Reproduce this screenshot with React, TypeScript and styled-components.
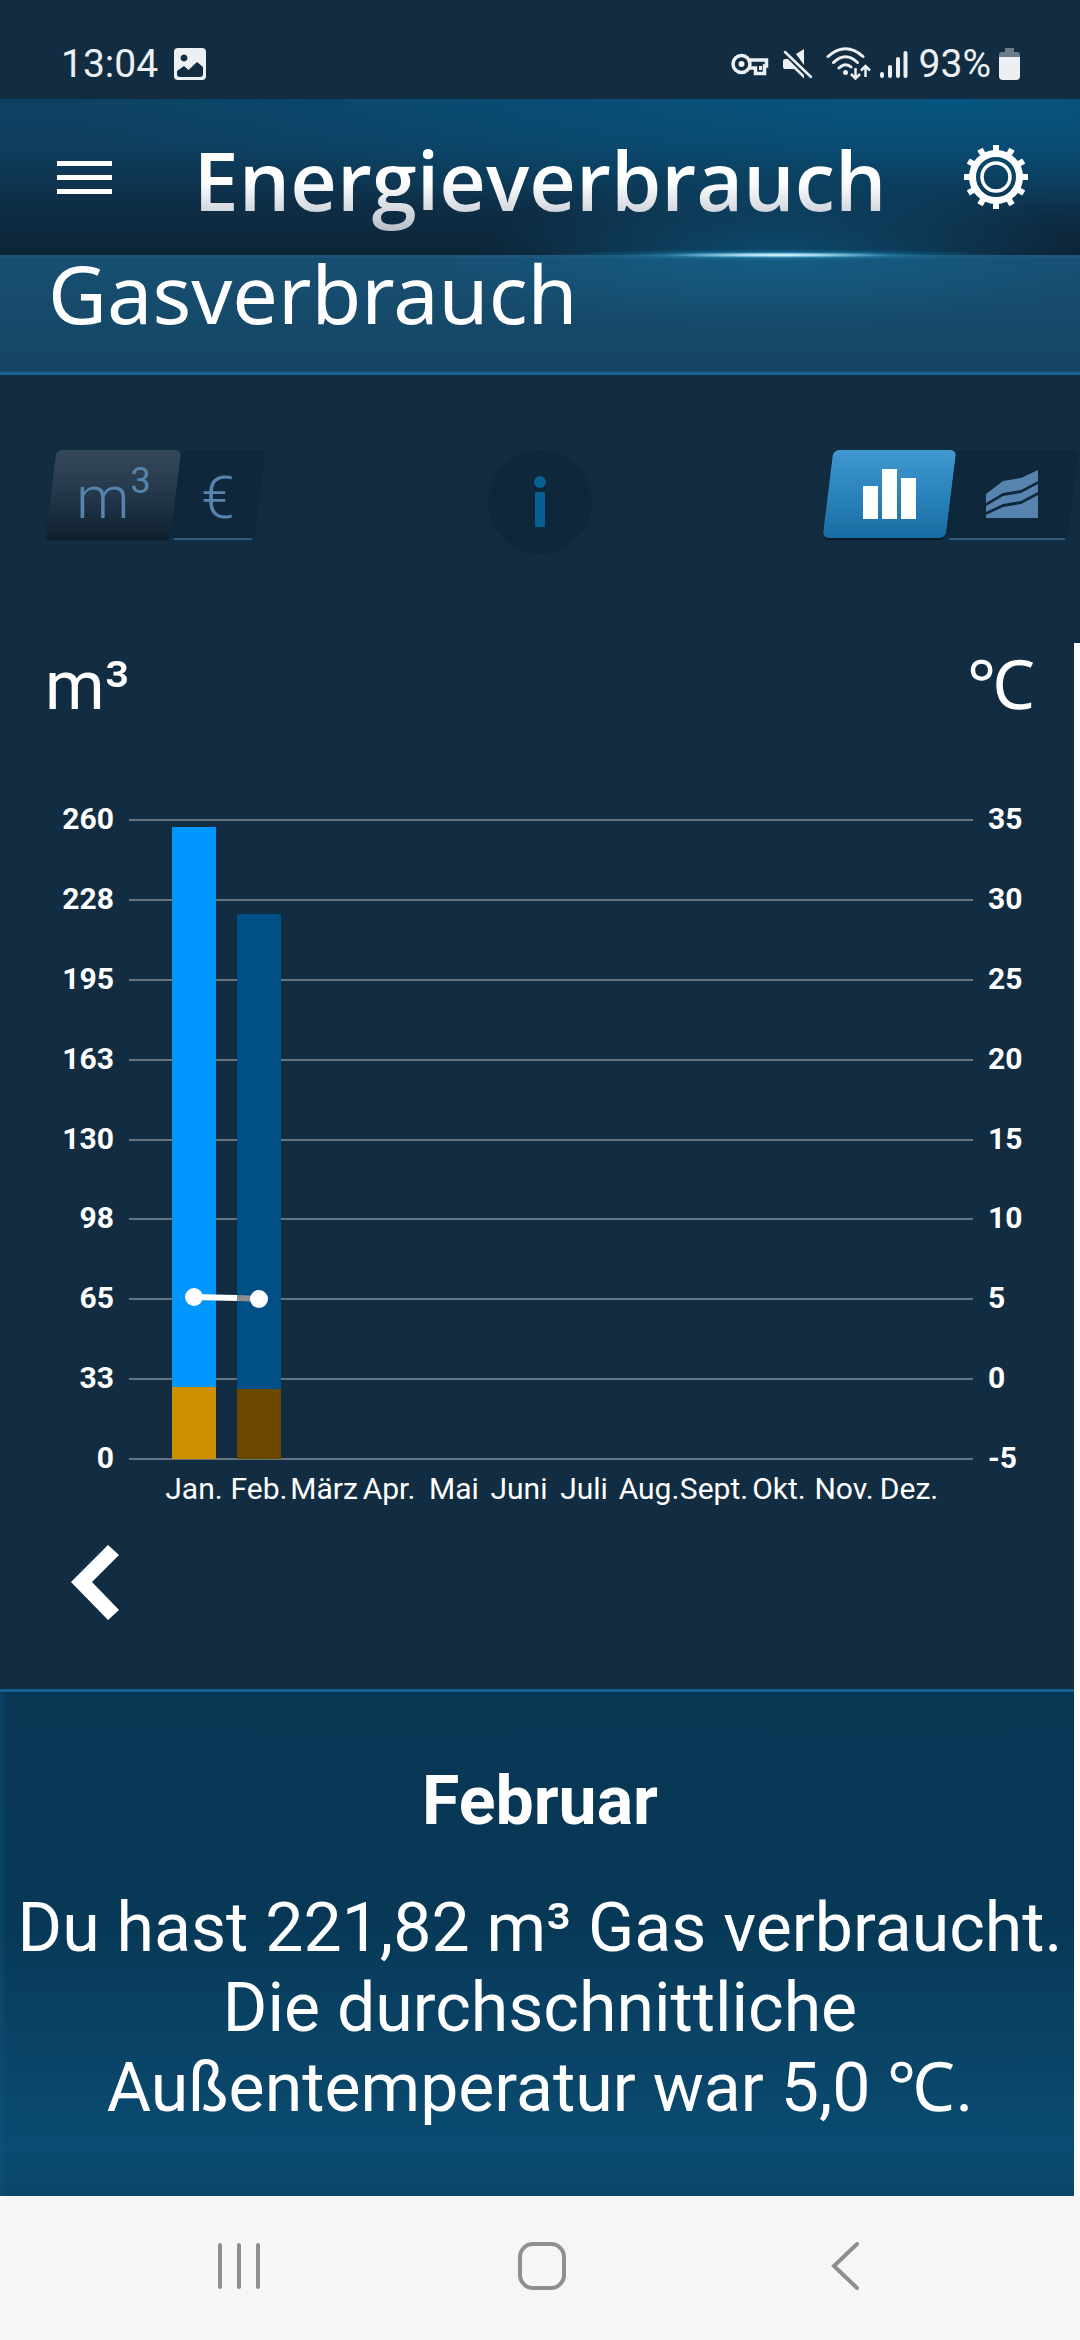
import React from "react";
import styled, { createGlobalStyle, css } from "styled-components";

const GlobalStyle = createGlobalStyle`
  *, *::before, *::after { box-sizing: border-box; }
  html, body { margin: 0; padding: 0; }
  body {
    background: #122d42;
    color: #fff;
    font-family: Roboto, "Liberation Sans", sans-serif;
  }
`;

const Screen = styled.div`
  display: flex;
  flex-direction: column;
  min-height: 100vh;
`;

const StatusBar = styled.header`
  display: flex;
  align-items: center;
  justify-content: space-between;
  height: 99px;
  padding: 28px 60px 0 61px;
  background: #122d42;
  color: #edf0f3;
  font-size: 39px;
  line-height: 48px;
`;

const StatusGroup = styled.div<{ $gap: number }>`
  display: flex;
  align-items: center;
  gap: ${(p) => p.$gap}px;
`;

const StatusIcons = styled.svg`
  display: block;
`;

const TitleBar = styled.div`
  position: relative;
  display: grid;
  grid-template-columns: 168px 1fr 168px;
  align-items: center;
  height: 156px;
  background:
    radial-gradient(ellipse 300px 80px at 72% 156px, rgba(12, 94, 138, 0.65), rgba(12, 80, 120, 0) 100%),
    radial-gradient(ellipse 900px 130px at 88% 0, rgba(4, 92, 138, 0.75), rgba(4, 90, 134, 0) 100%),
    linear-gradient(#0d4163 0%, #0e3e5e 30%, #0e2d45 70%, #0d2437 100%);
`;

const Flare = styled.div`
  position: absolute;
  left: 50%;
  bottom: -6px;
  width: 44%;
  height: 12px;
  z-index: 2;
  background:
    radial-gradient(ellipse 24% 22% at 50% 50%, rgba(225, 250, 255, 0.95), rgba(160, 225, 240, 0) 100%),
    radial-gradient(ellipse 50% 50% at 50% 50%, rgba(130, 220, 245, 0.95), rgba(50, 160, 205, 0.7) 30%, rgba(20, 120, 165, 0.3) 65%, rgba(20, 110, 150, 0) 100%);
`;

const IconButton = styled.button`
  display: flex;
  align-items: center;
  justify-content: center;
  padding: 0;
  border: 0;
  background: none;
  color: inherit;
  cursor: pointer;

  svg { display: block; }
`;

const headingFont = css`
  margin: 0;
  font-size: 81px;
  white-space: nowrap;
`;

const Title = styled.h1`
  ${headingFont}
  padding-top: 6px;
  font-family: "Open Sans", "Noto Sans", sans-serif;
  font-weight: 600;
  line-height: 108px;
  text-align: center;
  background: linear-gradient(#fff 54%, #d4d8de 79%, #b4bac4 100%);
  background-clip: text;
  -webkit-background-clip: text;
  color: transparent;
`;

const Section = styled.section`
  height: 120px;
  padding: 0 48px;
  border-top: 3px solid #20557a;
  border-bottom: 3px solid #19649b;
  background:
    radial-gradient(ellipse 360px 70px at 72% 0, rgba(20, 100, 142, 0.6), rgba(20, 90, 130, 0)),
    linear-gradient(#174f72, #154563);
`;

const SectionTitle = styled.h2`
  ${headingFont}
  font-family: "Noto Sans", "Open Sans", sans-serif;
  font-weight: 400;
  line-height: 70px;
`;

const Content = styled.main`
  flex: 1;
  display: flex;
  flex-direction: column;
`;

const Controls = styled.div`
  display: grid;
  grid-template-columns: 1fr auto 1fr;
  align-items: start;
  padding: 75px 7px 0;
`;

const Toggle = styled.div<{ $end?: boolean }>`
  display: flex;
  margin-left: ${(p) => (p.$end ? "auto" : "44px")};
`;

const Segment = styled.button<{ $width: number; $look: "dark" | "blue" | "off" }>`
  position: relative;
  z-index: 0;
  display: flex;
  align-items: center;
  justify-content: center;
  width: ${(p) => p.$width}px;
  height: 88px;
  padding: 0;
  border: 0;
  background: none;
  color: #5684ae;
  font-family: inherit;
  font-size: 60px;
  font-weight: 300;
  line-height: 88px;
  cursor: pointer;

  &::before {
    content: "";
    position: absolute;
    inset: 0;
    z-index: -1;
    border-radius: 6px;
    transform: skewX(-7deg);
    background: ${(p) =>
      p.$look === "dark"
        ? "linear-gradient(#36495b, #24384b 50%, #10212f)"
        : p.$look === "blue"
        ? "linear-gradient(#3f98cf, #2a84bb 50%, #176da2)"
        : "#0e273b"};
    box-shadow: ${(p) => (p.$look === "off" ? "none" : "0 2px 1px #0b1c2a")};
  }

  ${(p) =>
    p.$look === "off" &&
    css`
      &::after {
        content: "";
        position: absolute;
        left: -2px;
        right: 8px;
        bottom: -2px;
        height: 2px;
        background: #305b81;
      }
    `}

  svg { display: block; }
`;

const SegmentLabel = styled.span`
  display: flex;
  align-items: flex-start;
  gap: 1px;
  padding-top: 8px;
`;

const Exponent = styled.sup`
  font-size: 36px;
  font-weight: 400;
  line-height: 54px;
`;

const InfoButton = styled.button`
  display: flex;
  align-items: center;
  justify-content: center;
  width: 104px;
  height: 104px;
  padding: 0;
  border: 0;
  border-radius: 50%;
  background: #0e273b;
  cursor: pointer;
`;

const Units = styled.div`
  display: flex;
  justify-content: space-between;
  margin-top: 92px;
  padding: 0 45px;
  font-size: 68px;
  line-height: 80px;
`;

const Chart = styled.svg`
  display: block;
  width: 100%;
  height: auto;
  margin-top: 74px;
  overflow: visible;
  font-family: Roboto, "Liberation Sans", sans-serif;
  font-size: 30px;
  fill: #fff;
`;

const AxisLabel = styled.text`
  font-weight: 700;
`;

const Pager = styled.div`
  display: flex;
  padding: 41px 70px 69px;
`;

const Summary = styled.section`
  flex: 1;
  padding: 69px 0 66px;
  border-top: 3px solid #175f94;
  text-align: center;
  font-size: 68px;
  line-height: 80px;
  background:
    linear-gradient(90deg, rgba(16, 90, 134, 0.35), rgba(16, 90, 134, 0) 7px),
    linear-gradient(#083754 0%, #073856 45%, #0a4366 70%, #0a4b71 90%, #0a4669 100%);
`;

const Month = styled.h3`
  margin: 0 0 47px;
  font-size: inherit;
  font-weight: 700;
`;

const SummaryText = styled.p`
  margin: 0;
`;

const NavBar = styled.nav`
  display: grid;
  grid-template-columns: repeat(3, 1fr);
  height: 144px;
  padding: 0 84px 4px 88px;
  background: #f6f6f6;
  color: #8f8f8f;
`;

const ScrollThumb = styled.div`
  position: absolute;
  top: 643px;
  right: 0;
  bottom: 144px;
  width: 6px;
  background: #fff;
`;

const Frame = styled.div`
  position: relative;
`;

const months = ["Jan.", "Feb.", "März", "Apr.", "Mai", "Juni", "Juli", "Aug.", "Sept.", "Okt.", "Nov.", "Dez."];

const ticks = [
  { gas: "260", temp: "35" },
  { gas: "228", temp: "30" },
  { gas: "195", temp: "25" },
  { gas: "163", temp: "20" },
  { gas: "130", temp: "15" },
  { gas: "98", temp: "10" },
  { gas: "65", temp: "5" },
  { gas: "33", temp: "0" },
  { gas: "0", temp: "-5" },
];

const bars = [
  { top: 27, split: 587, heating: "#0096ff", water: "#cc8f00" },
  { top: 114, split: 589, heating: "#004f87", water: "#6b4a00" },
];

const monthX = (i: number) => 194 + i * 65;
const tickY = (i: number) => Math.round(20 + i * 79.875);

function GearIcon() {
  const teeth = Array.from({ length: 12 }, (_, i) => i * 30);
  return (
    <svg width="64" height="66" viewBox="-32 -33 64 66" fill="none" stroke="#fff">
      {teeth.map((a) => (
        <rect key={a} x="-3" y="-32" width="6" height="9" fill="#fff" stroke="none" transform={`rotate(${a})`} />
      ))}
      <circle r="23.5" strokeWidth="7" />
      <circle r="14" strokeWidth="3.5" />
    </svg>
  );
}

export default function App() {
  return (
    <Frame>
      <GlobalStyle />
      <Screen>
        <StatusBar>
          <StatusGroup $gap={16}>
            <span>13:04</span>
            <StatusIcons width="32" height="32" viewBox="0 0 32 32">
              <path fill="#edf0f3" fillRule="evenodd" d="M4 0H28a4 4 0 0 1 4 4V28a4 4 0 0 1-4 4H4a4 4 0 0 1-4-4V4a4 4 0 0 1 4-4ZM10 6.500a3.500 3.500 0 1 0 .01 0ZM3 23v3a3 3 0 0 0 3 3H26a3 3 0 0 0 3-3V19l-6-5-8.500 8-4.500-4Z" />
            </StatusIcons>
          </StatusGroup>
          <StatusGroup $gap={8}>
            <StatusIcons width="181" height="36" viewBox="0 0 181 36" fill="none" stroke="#edf0f3">
              <path strokeWidth="3.500" d="M19.500 14H36.500V20H34.500V27.500H25.500V22H19.500" />
              <path strokeWidth="3" d="M30.500 20V24" />
              <circle cx="11.500" cy="18" r="8.500" strokeWidth="3.500" />
              <circle cx="11.500" cy="18" r="3" fill="#edf0f3" stroke="none" />
              <path fill="#edf0f3" stroke="none" d="M55 13H58L74 29V32.500L64 23H55Q53 23 53 21V15Q53 13 55 13ZM66 8L74 3V19Z" />
              <path strokeWidth="2.500" strokeLinecap="round" d="M55 6L81 31" />
              <path strokeWidth="3" strokeLinecap="round" d="M98 10.500Q115.500 -5 133 10.500M103.500 16.500Q115.500 5 127.500 16.500M109 22Q115.500 16 121 21" />
              <circle cx="115.500" cy="26.500" r="2.500" fill="#edf0f3" stroke="none" />
              <path strokeWidth="2.500" d="M125.500 22V32M121 28L125.500 32.500L130 28M135.500 31V20M131 24.500L135.500 20L140 24.500" />
              <path strokeWidth="4" strokeLinecap="round" d="M152 28V30M160 21V30M168 13V30M175.500 7V30" />
            </StatusIcons>
            <span>93%</span>
            <StatusIcons width="21" height="32" viewBox="0 0 21 32">
              <path fill="#6b7c8a" d="M6 0h9v4h3a3 3 0 0 1 3 3v3H0V7a3 3 0 0 1 3-3h3Z" />
              <path fill="#edf0f3" d="M0 9h21v19a4 4 0 0 1-4 4H4a4 4 0 0 1-4-4Z" />
            </StatusIcons>
          </StatusGroup>
        </StatusBar>

        <TitleBar>
          <IconButton aria-label="Menü">
            <svg width="55" height="33" viewBox="0 0 55 33" fill="#fff">
              <rect width="55" height="5" />
              <rect y="14" width="55" height="5" />
              <rect y="28" width="55" height="5" />
            </svg>
          </IconButton>
          <Title>Energieverbrauch</Title>
          <IconButton aria-label="Einstellungen">
            <GearIcon />
          </IconButton>
          <Flare />
        </TitleBar>

        <Section>
          <SectionTitle>Gasverbrauch</SectionTitle>
        </Section>

        <Content>
          <Controls>
            <Toggle>
              <Segment $width={125} $look="dark">
                <SegmentLabel>
                  m<Exponent>3</Exponent>
                </SegmentLabel>
              </Segment>
              <Segment $width={84} $look="off">
                <SegmentLabel>€</SegmentLabel>
              </Segment>
            </Toggle>
            <InfoButton aria-label="Information">
              <svg width="12" height="52" viewBox="0 0 12 52" fill="#066192">
                <circle cx="6" cy="6" r="6" />
                <rect x="1" y="16" width="10" height="35" />
              </svg>
            </InfoButton>
            <Toggle $end>
              <Segment $width={123} $look="blue" aria-label="Balken">
                <svg width="54" height="50" viewBox="0 0 54 50" fill="#fff">
                  <rect y="17" width="15" height="33" />
                  <rect x="19" width="15" height="50" />
                  <rect x="38" y="9" width="15" height="41" />
                </svg>
              </Segment>
              <Segment $width={122} $look="off" aria-label="Flächen">
                <svg width="52" height="50" viewBox="0 0 52 50" fill="#5684ae">
                  <path d="M0 25 17 12 35 9 52 1V12L35 21 17 24 0 34Z" />
                  <path d="M0 37 17 27 35 24 52 15V23L35 32 17 35 0 43Z" />
                  <path d="M0 46 17 38 35 35 52 26V49H0Z" />
                </svg>
              </Segment>
            </Toggle>
          </Controls>

          <Units>
            <span>m³</span>
            <span>℃</span>
          </Units>

          <Chart viewBox="0 0 1080 704" role="img" aria-label="Gasverbrauch pro Monat">
            {ticks.map((t, i) => (
              <g key={t.gas}>
                <rect x="129" y={tickY(i) - 1} width="844" height="2" fill="#66747f" />
                <AxisLabel x="114" y={tickY(i) + 9} textAnchor="end">{t.gas}</AxisLabel>
                <AxisLabel x="988" y={tickY(i) + 9}>{t.temp}</AxisLabel>
              </g>
            ))}
            {bars.map((b, i) => (
              <g key={b.top}>
                <rect x={monthX(i) - 22} y={b.top} width="44" height={b.split - b.top} fill={b.heating} />
                <rect x={monthX(i) - 22} y={b.split} width="44" height={659 - b.split} fill={b.water} />
              </g>
            ))}
            <path d="M194 497L237 498" stroke="#fff" strokeWidth="6" />
            <path d="M237 498L259 499" stroke="#8b8d90" strokeWidth="6" />
            <circle cx="194" cy="497" r="9" />
            <circle cx="259" cy="499" r="9" />
            {months.map((m, i) => (
              <text key={m} x={monthX(i)} y="699" textAnchor="middle">{m}</text>
            ))}
          </Chart>

          <Pager>
            <IconButton aria-label="Vorheriges Jahr">
              <svg width="49" height="75" viewBox="0 0 49 75" fill="#fff">
                <path d="M1 37 38 0 49 10 22 37 49 65 38 75Z" />
              </svg>
            </IconButton>
          </Pager>

          <Summary>
            <Month>Februar</Month>
            <SummaryText>
              Du hast 221,82 m³ Gas verbraucht.
              <br />
              Die durchschnittliche
              <br />
              Außentemperatur war 5,0 ℃.
            </SummaryText>
          </Summary>
        </Content>

        <NavBar>
          <IconButton aria-label="Letzte Apps">
            <svg width="42" height="48" viewBox="0 0 42 48" stroke="currentColor" strokeWidth="4" strokeLinecap="round">
              <path d="M2 3V45M21 3V45M40 3V45" />
            </svg>
          </IconButton>
          <IconButton aria-label="Startseite">
            <svg width="48" height="48" viewBox="0 0 48 48" fill="none" stroke="currentColor" strokeWidth="4">
              <rect x="2" y="2" width="44" height="44" rx="13" />
            </svg>
          </IconButton>
          <IconButton aria-label="Zurück">
            <svg width="28" height="48" viewBox="0 0 28 48" fill="none" stroke="currentColor" strokeWidth="4" strokeLinecap="round">
              <path d="M26 2 3 24 26 46" />
            </svg>
          </IconButton>
        </NavBar>
      </Screen>
      <ScrollThumb />
    </Frame>
  );
}
